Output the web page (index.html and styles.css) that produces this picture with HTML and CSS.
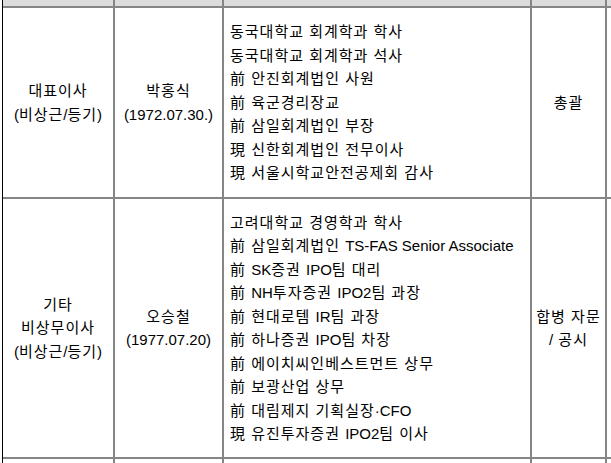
FILE: index.html
```html
<!DOCTYPE html>
<html lang="ko">
<head>
<meta charset="utf-8">
<title>임원 현황</title>
<link rel="stylesheet" href="styles.css">
</head>
<body>
<div class="frame">
<table class="grid">
<colgroup>
<col class="c1"><col class="c2"><col class="c3"><col class="c4"><col class="c5">
</colgroup>
<tr class="head"><th></th><th></th><th></th><th></th><th></th></tr>
<tr class="r1">
<td class="mid">대표이사<br><span class="lat">(</span>비상근<span class="lat">/</span>등기<span class="lat">)</span></td>
<td class="mid">박홍식<br><span class="lat">(1972.07.30.)</span></td>
<td class="career">동국대학교 회계학과 학사<br>동국대학교 회계학과 석사<br>前 안진회계법인 사원<br>前 육군경리장교<br>前 삼일회계법인 부장<br>現 신한회계법인 전무이사<br>現 서울시학교안전공제회 감사</td>
<td class="mid">총괄</td>
<td></td>
</tr>
<tr class="r2">
<td class="mid">기타<br>비상무이사<br><span class="lat">(</span>비상근<span class="lat">/</span>등기<span class="lat">)</span></td>
<td class="mid">오승철<br><span class="lat">(1977.07.20)</span></td>
<td class="career">고려대학교 경영학과 학사<br>前 삼일회계법인 <span class="lat">TS-FAS Senior Associate</span><br>前 <span class="lat">SK</span>증권 <span class="lat">IPO</span>팀 대리<br>前 <span class="lat">NH</span>투자증권 <span class="lat">IPO2</span>팀 과장<br>前 현대로템 <span class="lat">IR</span>팀 과장<br>前 하나증권 <span class="lat">IPO</span>팀 차장<br>前 에이치씨인베스트먼트 상무<br>前 보광산업 상무<br>前 대림제지 기획실장<span class="lat">·CFO</span><br>現 유진투자증권 <span class="lat">IPO2</span>팀 이사</td>
<td class="mid">합병 자문<br><span class="lat">/</span> 공시</td>
<td></td>
</tr>
<tr class="r3"><td></td><td></td><td></td><td></td><td></td></tr>
</table>
</div>
</body>
</html>
```

FILE: styles.css
```css
html, body {
  margin: 0;
  padding: 0;
  background: #ffffff;
  overflow: hidden;
  width: 611px;
  height: 463px;
}

.frame {
  margin-left: 2px;
  border-left: 1px solid #000000;
  height: 463px;
  overflow: hidden;
}

.grid {
  table-layout: fixed;
  border-collapse: separate;
  border-spacing: 0;
  width: 704px;
  font-family: "Liberation Sans", "Noto Sans CJK KR", sans-serif;
  font-size: 15px;
  line-height: 23.5px;
  letter-spacing: 1px;
  color: #000000;
}

.lat {
  letter-spacing: 0;
}

.c1 { width: 112px; }
.c2 { width: 109px; }
.c3 { width: 308px; }
.c4 { width: 75px; }
.c5 { width: 100px; }

.grid th,
.grid td {
  box-sizing: border-box;
  border-right: 2px solid #858585;
  border-bottom: 2px solid #858585;
  padding: 0;
  vertical-align: middle;
  font-weight: normal;
}

.grid th {
  background: #dcdcdc;
  height: 8px;
}

.head { height: 8px; }
.r1 { height: 191px; }
.r2 { height: 260px; }
.r3 { height: 20px; }

.mid {
  text-align: center;
}

.career {
  text-align: left;
  padding-left: 6px !important;
}
```
